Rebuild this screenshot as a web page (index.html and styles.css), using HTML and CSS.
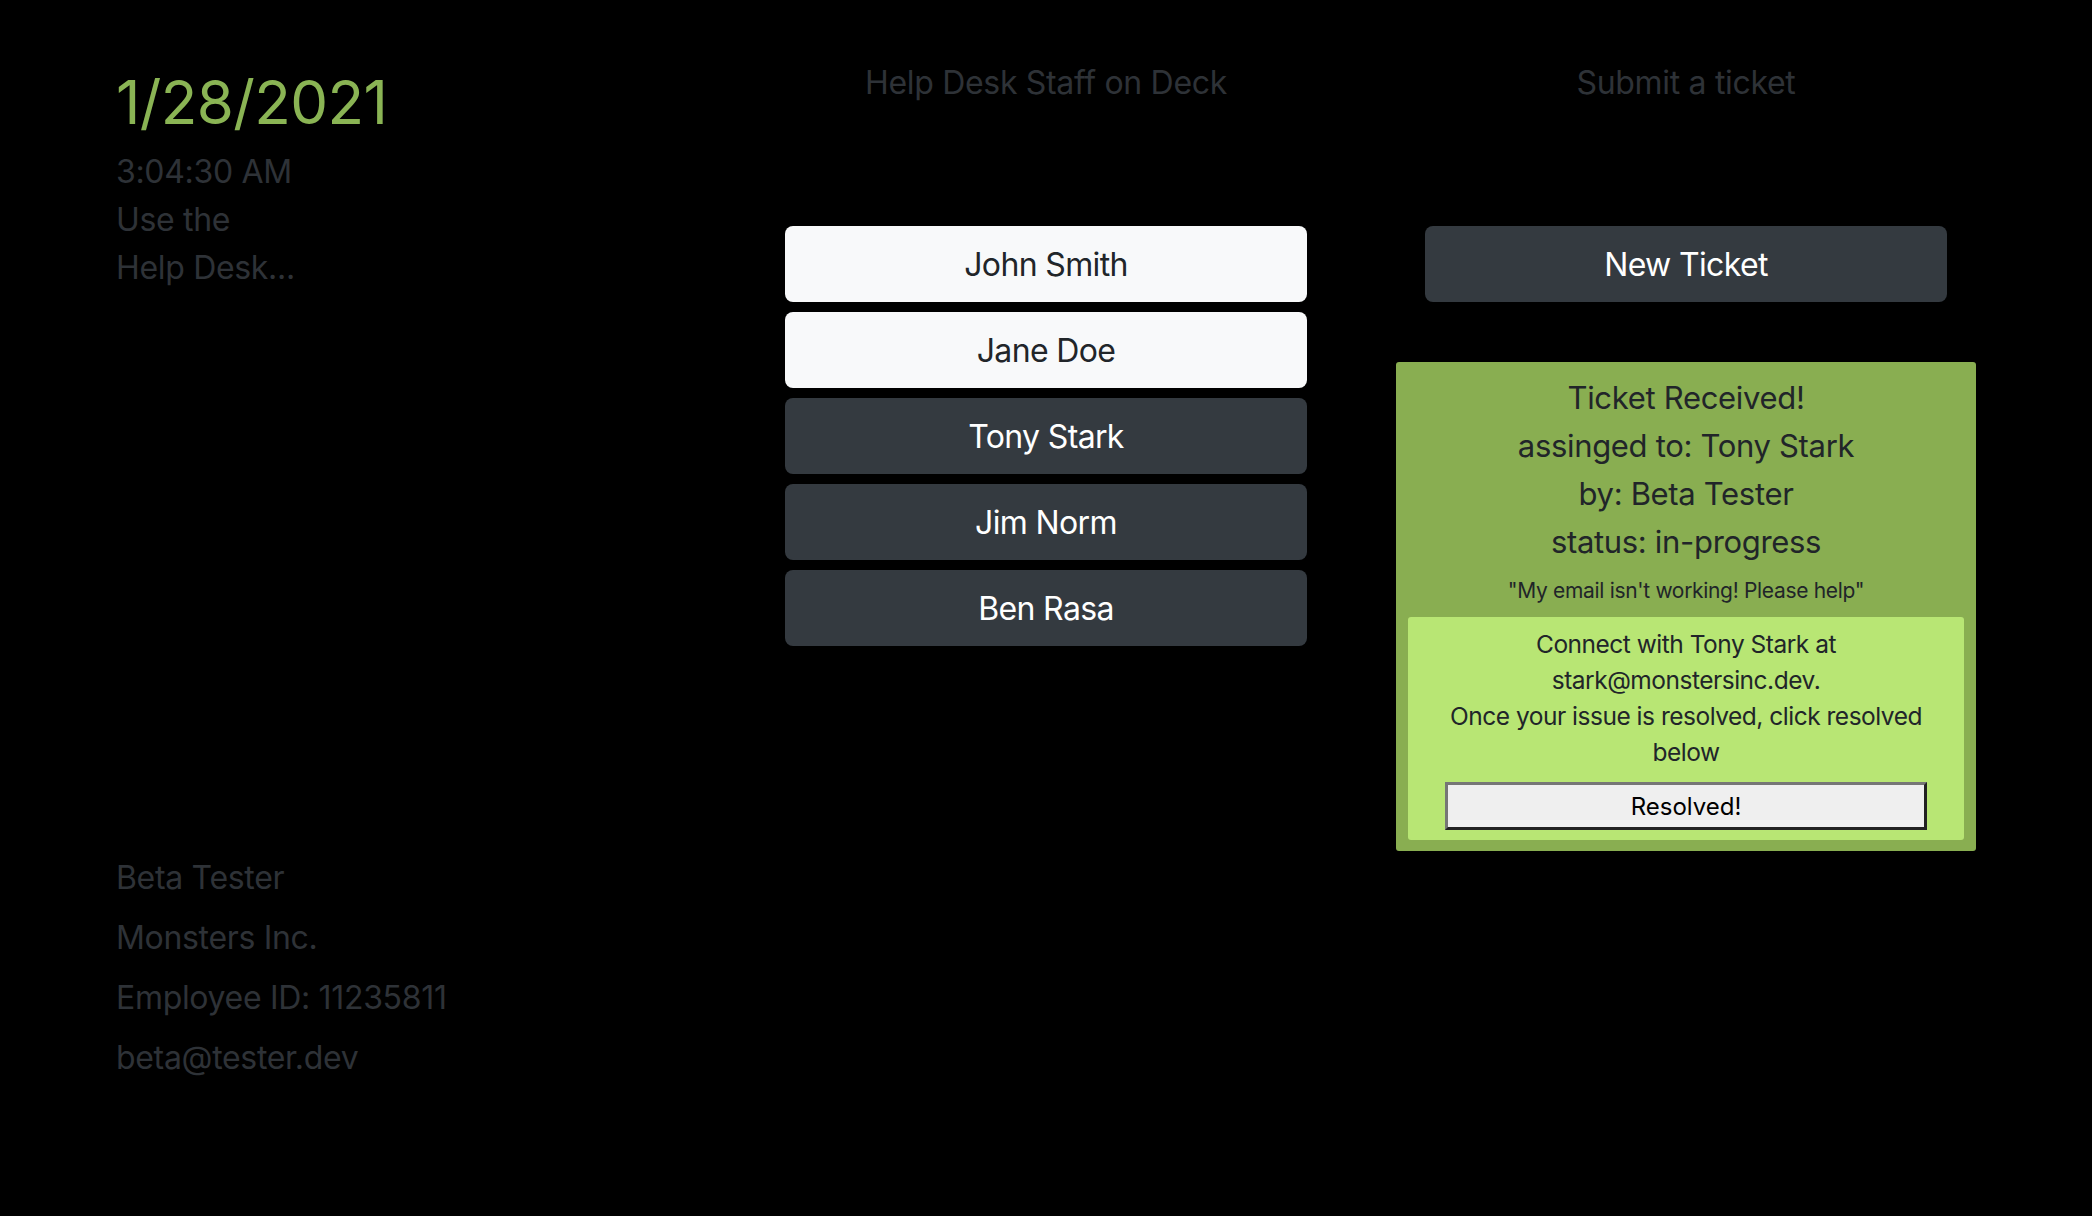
FILE: index.html
```html
<!DOCTYPE html>
<html lang="en">
<head>
<meta charset="utf-8">
<title>Help Desk</title>
<link rel="stylesheet" href="styles.css">
</head>
<body>
<div class="page">
  <div class="col col-left">
    <div class="date">1/28/2021</div>
    <div class="intro">
      <div>3:04:30 AM</div>
      <div>Use the</div>
      <div>Help Desk...</div>
    </div>
    <div class="profile">
      <div>Beta Tester</div>
      <div>Monsters Inc.</div>
      <div>Employee ID: 11235811</div>
      <div>beta@tester.dev</div>
    </div>
  </div>
  <div class="col col-mid">
    <div class="heading">Help Desk Staff on Deck</div>
    <div class="staff">
      <button class="btn btn-light">John Smith</button>
      <button class="btn btn-light">Jane Doe</button>
      <button class="btn btn-dark">Tony Stark</button>
      <button class="btn btn-dark">Jim Norm</button>
      <button class="btn btn-dark">Ben Rasa</button>
    </div>
  </div>
  <div class="col col-right">
    <div class="heading">Submit a ticket</div>
    <button class="btn btn-dark new-ticket">New Ticket</button>
    <div class="card">
      <div class="card-line">Ticket Received!</div>
      <div class="card-line">assinged to: Tony Stark</div>
      <div class="card-line">by: Beta Tester</div>
      <div class="card-line">status: in-progress</div>
      <div class="quote">"My email isn't working! Please help"</div>
      <div class="inner">
        <div class="inner-text">Connect with Tony Stark at stark@monstersinc.dev.</div>
        <div class="inner-text">Once your issue is resolved, click resolved below</div>
        <button class="resolve">Resolved!</button>
      </div>
    </div>
  </div>
</div>
</body>
</html>
```
FILE: styles.css
```css
html, body {
  margin: 0;
  padding: 0;
  background: #000;
}
body {
  font-family: Inter, "Noto Sans", sans-serif;
  color: #2e3237;
  letter-spacing: -0.02em;
  width: 2092px;
  height: 1216px;
  overflow: hidden;
}
.page {
  display: grid;
  grid-template-columns: 640px 640px 640px;
  padding-left: 86px;
}
.col {
  padding: 0 30px;
  display: flex;
  flex-direction: column;
  align-items: center;
}
.col-left {
  align-items: flex-start;
}
.date {
  font-size: 60px;
  line-height: 72px;
  letter-spacing: -0.01em;
  color: #8ab454;
  margin-top: 66px;
}
.intro {
  margin-top: 10px;
  font-size: 32px;
  line-height: 48px;
}
.profile {
  margin-top: 556px;
  font-size: 32px;
  line-height: 60px;
}
.heading {
  align-self: stretch;
  text-align: center;
  font-size: 32px;
  line-height: 48px;
  margin-top: 59px;
}
.staff {
  margin-top: 119px;
  width: 90%;
  display: flex;
  flex-direction: column;
  gap: 10px;
}
.btn {
  font-family: Inter, "Noto Sans", sans-serif;
  font-size: 32px;
  line-height: 48px;
  letter-spacing: -0.02em;
  padding: 15px 24px 13px;
  border: none;
  border-radius: 8px;
  text-align: center;
  width: 100%;
}
.btn-light {
  background: #f8f9fa;
  color: #212529;
}
.btn-dark {
  background: #343a40;
  color: #fff;
}
.new-ticket {
  margin-top: 119px;
  width: 90%;
}
.card {
  margin-top: 60px;
  align-self: stretch;
  padding: 12px 12px 11px;
  background: #89ae51;
  color: #212529;
  text-align: center;
  border-radius: 3px;
}
.card-line {
  font-size: 31px;
  line-height: 48px;
}
.quote {
  font-size: 21px;
  line-height: 30px;
  margin-top: 10px;
}
.inner {
  margin-top: 11px;
  background: #b8e674;
  padding: 9px 37px 10px;
  border-radius: 3px;
  display: flex;
  flex-direction: column;
}
.inner-text {
  font-size: 24.5px;
  line-height: 36px;
  letter-spacing: -0.02em;
}
.resolve {
  margin-top: 12px;
  height: 48px;
  font-family: Inter, "Noto Sans", sans-serif;
  font-size: 24px;
  color: #000;
  background: #efefef;
  border-width: 3px;
  border-style: solid;
  border-color: #767676 #222 #222 #767676;
  padding: 0;
}
```
